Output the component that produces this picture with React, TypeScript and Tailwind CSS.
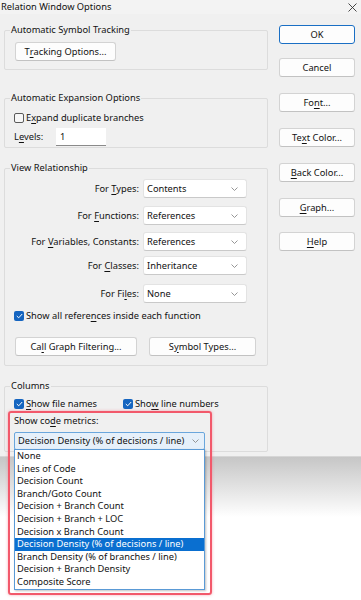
import React from 'react';

const U = ({ children }: { children: React.ReactNode }) => (
  <span className="underline underline-offset-[1.5px] decoration-[1px]">{children}</span>
);

function Btn({
  children,
  className = '',
  primary = false,
}: {
  children: React.ReactNode;
  className?: string;
  primary?: boolean;
}) {
  return (
    <div
      className={`flex h-[19px] items-center justify-center rounded-[3px] bg-[#fdfdfd] ${
        primary ? 'border-[1.5px] border-[#1a6fc4]' : 'border border-[#d3d3d3] border-b-[#c2c2c2]'
      } ${className}`}
    >
      {children}
    </div>
  );
}

function Chevron() {
  return (
    <svg width="7" height="4" viewBox="0 0 7 4" className="shrink-0">
      <path d="M0.5 0.5 L3.5 3.5 L6.5 0.5" fill="none" stroke="#8a8a8a" strokeWidth="0.9" />
    </svg>
  );
}

function Select({ value }: { value: string }) {
  return (
    <div className="flex h-[19px] w-[104px] items-center justify-between rounded-[3px] border border-[#e3e3e3] border-b-[#c9c9c9] bg-white pl-[3px] pr-[8px]">
      <span>{value}</span>
      <Chevron />
    </div>
  );
}

function Check({ checked, children, className = '' }: { checked?: boolean; children: React.ReactNode; className?: string }) {
  return (
    <div className={`flex h-[12px] items-center ${className}`}>
      {checked ? (
        <div className="flex h-[10px] w-[10px] items-center justify-center rounded-[2px] bg-[#1565c0]">
          <svg width="7" height="6" viewBox="0 0 7 6">
            <path d="M0.8 3 L2.7 4.8 L6.2 1" fill="none" stroke="white" strokeWidth="1" />
          </svg>
        </div>
      ) : (
        <div className="h-[10px] w-[10px] rounded-[2px] border border-[#5a5a5a] bg-[#f7f7f7]" />
      )}
      <span className="ml-[2px]">{children}</span>
    </div>
  );
}

function Group({
  label,
  className = '',
  inner = '',
  children,
}: {
  label: string;
  className?: string;
  inner?: string;
  children: React.ReactNode;
}) {
  return (
    <div className={`rounded-[2px] border border-[#dcdcdc] ${className}`}>
      <div className="-mt-[7px] ml-[5px] w-fit bg-[#f0f0f0] px-[1px] leading-[12px]">{label}</div>
      <div className={inner}>{children}</div>
    </div>
  );
}

const metrics = [
  'None',
  'Lines of Code',
  'Decision Count',
  'Branch/Goto Count',
  'Decision + Branch Count',
  'Decision + Branch + LOC',
  'Decision x Branch Count',
  'Decision Density (% of decisions / line)',
  'Branch Density (% of branches / line)',
  'Decision + Branch Density',
  'Composite Score',
];

const rows: { label: React.ReactNode; value: string; mt: string }[] = [
  { label: <>For <U>T</U>ypes:</>, value: 'Contents', mt: 'mt-[5px]' },
  { label: <>For <U>F</U>unctions:</>, value: 'References', mt: 'mt-[8px]' },
  { label: <>For <U>V</U>ariables, Constants:</>, value: 'References', mt: 'mt-[7px]' },
  { label: <>For <U>C</U>lasses:</>, value: 'Inheritance', mt: 'mt-[5px]' },
  { label: <>For Fi<U>l</U>es:</>, value: 'None', mt: 'mt-[9px]' },
];

export default function App() {
  return (
    <div className="relative h-[600px] w-[361px] overflow-hidden bg-white font-['Noto_Sans',sans-serif] text-[9.3px] leading-[12px] text-[#111]">
      {/* Dialog */}
      <div className="h-[457px] border-b border-[#d6d6d6] bg-[#f0f0f0]">
        <div className="flex h-[14px] items-center justify-between bg-[#f3f3f3] pl-[1px] pr-[4px]">
          <span>Relation Window Options</span>
          <svg width="9" height="9" viewBox="0 0 9 9">
            <path d="M0.5 0.5 L8.5 8.5 M8.5 0.5 L0.5 8.5" stroke="#333" strokeWidth="0.9" />
          </svg>
        </div>

        <div className="flex items-start">
          {/* Left column */}
          <div className="ml-[4px] mt-[16px] w-[264px]">
            <Group label="Automatic Symbol Tracking" className="pb-[8px]" inner="pl-[10px]">
              <Btn className="mt-[6px] w-[101px]">
                T<U>r</U>acking Options...
              </Btn>
            </Group>

            <Group label="Automatic Expansion Options" className="mt-[28px] pb-[1px]" inner="pl-[9px]">
              <Check className="mt-[8px]">
                E<U>x</U>pand duplicate branches
              </Check>
              <div className="mt-[4px] flex items-center">
                <span className="w-[42px]">
                  L<U>e</U>vels:
                </span>
                <div className="flex h-[18px] w-[50px] items-center border-b border-[#8a8a8a] bg-white pl-[4px]">1</div>
              </div>
            </Group>

            <Group label="View Relationship" className="mt-[20px] pb-[9px]">
              {rows.map((r, i) => (
                <div key={i} className={`flex items-center ${r.mt}`}>
                  <span className="w-[134px] text-right">{r.label}</span>
                  <div className="ml-[4px]">
                    <Select value={r.value} />
                  </div>
                </div>
              ))}
              <Check checked className="ml-[9px] mt-[7px]">
                Show all refere<U>n</U>ces inside each function
              </Check>
              <div className="ml-[10px] mt-[15px] flex">
                <Btn className="h-[18px] w-[122px]">
                  Ca<U>l</U>l Graph Filtering...
                </Btn>
                <Btn className="ml-[12px] h-[18px] w-[107px]">
                  S<U>y</U>mbol Types...
                </Btn>
              </div>
            </Group>

            <Group label="Columns" className="mt-[20px] pb-[1px]" inner="pl-[9px]">
              <div className="mt-[6px] flex">
                <Check checked className="w-[109px]">
                  <U>S</U>how file names
                </Check>
                <Check checked>
                  Sho<U>w</U> line numbers
                </Check>
              </div>
              <div className="mt-[5px] h-[12px]">
                Show co<U>d</U>e metrics:
              </div>
              <div className="mt-[5px] flex h-[18px] w-[191px] items-center justify-between rounded-[2px] border border-[#6aa6dc] bg-[#e6f0fa] pl-[3px] pr-[5px]">
                <span>Decision Density (% of decisions / line)</span>
                <Chevron />
              </div>
            </Group>
          </div>

          {/* Right column */}
          <div className="ml-[11px] mt-[11px] flex w-[76px] flex-col">
            <Btn primary className="h-[18px]">OK</Btn>
            <Btn className="mt-[14px] h-[18px]">Cancel</Btn>
            <Btn className="mt-[16px]">
              Fo<U>n</U>t...
            </Btn>
            <Btn className="mt-[16px]">
              Te<U>x</U>t Color...
            </Btn>
            <Btn className="mt-[16px]">
              <U>B</U>ack Color...
            </Btn>
            <Btn className="mt-[16px]">
              <U>G</U>raph...
            </Btn>
            <Btn className="mt-[15px]">
              <U>H</U>elp
            </Btn>
          </div>
        </div>
      </div>
      <div className="h-[60px] bg-gradient-to-b from-[#c6c6c6] to-white" />

      {/* Open dropdown list */}
      <div className="absolute left-[14px] top-[449px] w-[191px] border border-[#5a9ad6] bg-white shadow-[1px_1px_2px_rgba(0,0,0,0.25)]">
        {metrics.map((m, i) => (
          <div
            key={m}
            className={`h-[12.6px] pl-[2px] leading-[12.6px] ${i === 7 ? 'bg-[#0a6fd0] text-white' : ''}`}
          >
            {m}
          </div>
        ))}
      </div>

      {/* Highlight frame */}
      <div className="pointer-events-none absolute left-[8px] top-[411px] h-[184px] w-[204px] rounded-[3px] border-2 border-[#f2596b] shadow-[0_0_3px_rgba(242,89,107,0.5)]" />
    </div>
  );
}
